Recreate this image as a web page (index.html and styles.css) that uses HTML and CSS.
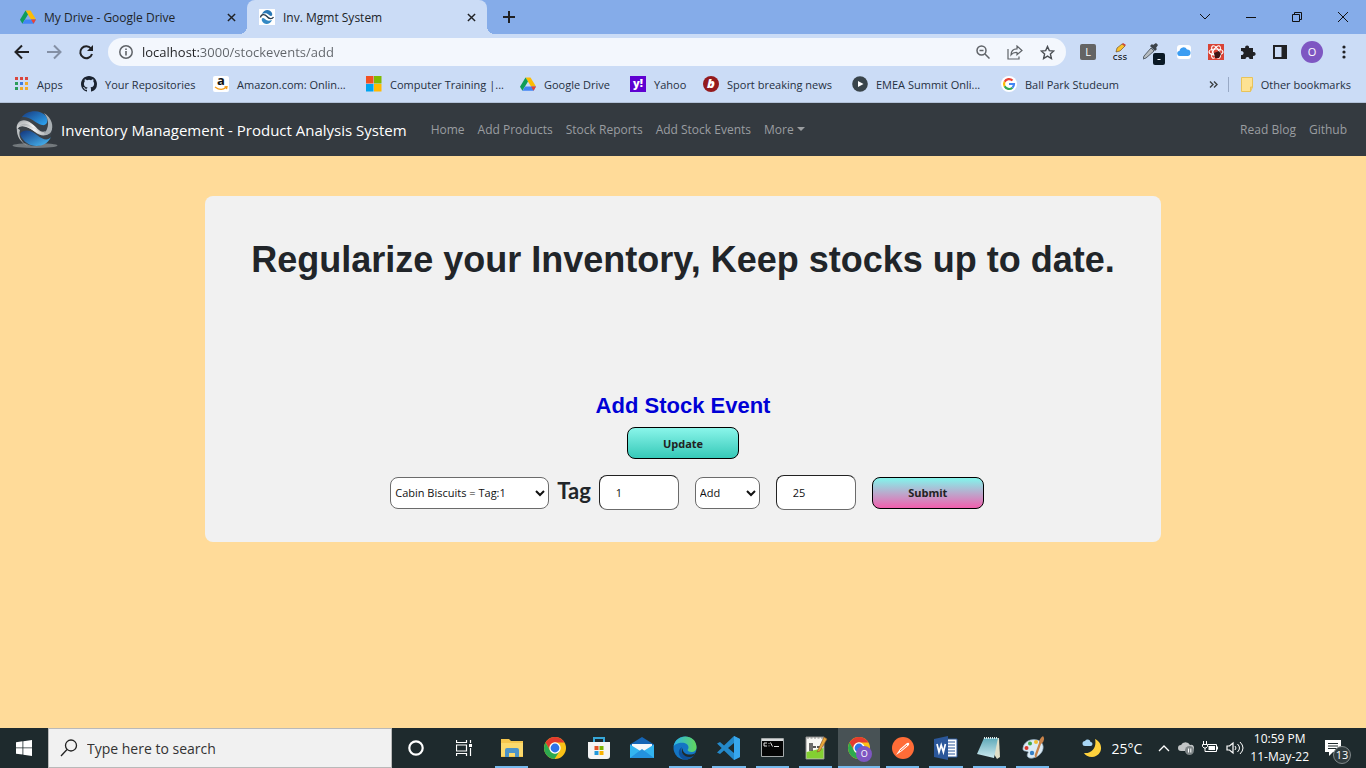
FILE: index.html
```html
<!DOCTYPE html>
<html lang="en">
<head>
<meta charset="utf-8">
<meta name="viewport" content="width=device-width, initial-scale=1">
<title>Inv. Mgmt System</title>
<link rel="stylesheet" href="styles.css">
</head>
<body>
<svg class="defs" width="0" height="0" aria-hidden="true">
  <defs>
    <linearGradient id="blueTop" x1="0" y1="0" x2="1" y2="1"><stop offset="0" stop-color="#163a80"/><stop offset="1" stop-color="#2fa8f4"/></linearGradient>
    <linearGradient id="blueLow" x1="0" y1="0" x2="1" y2="1"><stop offset="0" stop-color="#12357c"/><stop offset="1" stop-color="#4cc0fa"/></linearGradient>
    <linearGradient id="silver" x1="0" y1="0" x2="1" y2="1"><stop offset="0" stop-color="#9da2a6"/><stop offset=".5" stop-color="#f4f4f4"/><stop offset="1" stop-color="#a0a5a8"/></linearGradient>
    <linearGradient id="edgeGreen" x1="0" y1="0" x2="1" y2="0"><stop offset="0" stop-color="#2ab4ea"/><stop offset="1" stop-color="#62d65a"/></linearGradient>
    <linearGradient id="note" x1="0" y1="0" x2="0" y2="1"><stop offset="0" stop-color="#5fa9b8"/><stop offset="1" stop-color="#cdeaf0"/></linearGradient>
    <symbol id="drive" viewBox="0 0 16 16">
      <path d="M5.5 1.500h5L16 10.500h-5z" fill="#fbbc04"/><path d="M5.500 1.500 0 10.700l2.400 4L8 5.500z" fill="#0f9d58"/><path d="M5.200 10.500H16l-2.400 4.200H2.400z" fill="#4285f4"/><path d="M11 10.500h5l-2.400 4.200z" fill="#ea4335"/>
    </symbol>
    <symbol id="sphere" viewBox="0 0 46 40">
      <ellipse cx="23" cy="35.500" rx="22.500" ry="2.600" fill="#73797d"/>
      <circle cx="23" cy="18.500" r="17.500" fill="#3a4148"/>
      <path d="M10 7C15 0 28-1 34 6c3 5 1 10-4 9C23 13 18 6 10 7z" fill="url(#blueTop)"/>
      <path d="M8 24c4-6 12-3 17 1 6 5 11 6 14 2C34 39 14 40 8 24z" fill="url(#blueLow)"/>
      <path d="M5 20c-2-8 6-13 14-7 7 5 9 11 15 8-2 4-8 3-12 0C16 17 8 13 5 20z" fill="url(#silver)"/>
      <path d="M7 17c3-5 9-4 15 1 6 6 14 7 18-1-1 9-10 11-17 5C17 17 10 14 7 17z" fill="url(#silver)"/>
      <path d="M32 3c8 5 10 13 7 19-2 3-5 3-7 2 5-6 6-14 0-21z" fill="#a9afb3"/>
      <path d="M5 18c-1 8 4 15 11 18C9 32 6 26 8 20z" fill="#b9bec1"/>
    </symbol>
    <symbol id="chrome" viewBox="0 0 24 24">
      <circle cx="12" cy="12" r="11" fill="#fbc116"/>
      <path d="M2.500 6.500A11 11 0 0 1 21.500 6.500H12A5.500 5.500 0 0 0 7.200 14.700z" fill="#e33b2e"/>
      <path d="M2.500 6.500A11 11 0 0 0 11.500 23l5.300-8.200a5.500 5.500 0 0 1-9.600-.1z" fill="#2da94f"/>
      <circle cx="12" cy="12" r="5.700" fill="#fff"/><circle cx="12" cy="12" r="4.400" fill="#2f73e8"/>
    </symbol>
    <symbol id="cross" viewBox="0 0 10 10"><path d="M1 1l8 8M9 1 1 9" stroke="#202124" stroke-width="1.600" fill="none"/></symbol>
  </defs>
</svg>

<header class="browser">
  <div class="tabstrip">
    <div class="tab">
      <svg class="ico16"><use href="#drive"/></svg>
      <span class="tab-title">My Drive - Google Drive</span>
      <button class="tab-close" aria-label="Close My Drive"><svg width="9" height="9"><use href="#cross"/></svg></button>
    </div>
    <div class="tab tab-active">
      <svg class="ico16" viewBox="0 0 16 16"><path fill="#fff" d="M0 0h16v16H0z"/><path d="M3 5c2-5 8-5 10-1 1 3-1 4-3 2-2-2-4-2-7-1z" fill="#2a78b5"/><path d="M13 11c-2 5-8 5-10 1-1-3 1-4 3-2 2 2 4 2 7 1z" fill="#3389c4"/><path d="M1.500 8.500C2 4.500 6 5 8 7.500s5 3 6.500.5" stroke="#293b49" stroke-width="1.300" fill="none"/></svg>
      <span class="tab-title">Inv. Mgmt System</span>
      <button class="tab-close" aria-label="Close Inv. Mgmt System"><svg width="9" height="9"><use href="#cross"/></svg></button>
    </div>
    <button class="new-tab" aria-label="New tab"><svg width="12" height="12" viewBox="0 0 12 12"><path d="M6 0v12M0 6h12" stroke="#202124" stroke-width="2"/></svg></button>
    <div class="window-buttons">
      <button aria-label="Search tabs"><svg width="12" height="12" viewBox="0 0 12 12"><path d="M1 3l5 5 5-5" stroke="#111" fill="none"/></svg></button>
      <button aria-label="Minimize"><svg width="12" height="12" viewBox="0 0 12 12"><path d="M1 6.500h10" stroke="#111"/></svg></button>
      <button aria-label="Restore"><svg width="12" height="12" viewBox="0 0 12 12"><path d="M1.500 3.500h7v7h-7zM3.500 3V1.500h7v7H9" stroke="#111" fill="none"/></svg></button>
      <button aria-label="Close"><svg width="12" height="12" viewBox="0 0 12 12"><path d="M1 1l10 10M11 1 1 11" stroke="#111"/></svg></button>
    </div>
  </div>

  <div class="toolbar">
    <div class="history">
      <button aria-label="Back"><svg width="16" height="16" viewBox="0 0 16 16"><path d="M15 8H2M8 1.500 1.500 8 8 14.500" stroke="#202124" stroke-width="2" fill="none"/></svg></button>
      <button aria-label="Forward"><svg width="16" height="16" viewBox="0 0 16 16"><path d="M1 8h13M8 1.500 14.500 8 8 14.500" stroke="#8490a5" stroke-width="2" fill="none"/></svg></button>
      <button aria-label="Reload"><svg width="16" height="16" viewBox="0 0 16 16"><path d="M13 4.500A6 6 0 1 0 14 10" stroke="#202124" stroke-width="2" fill="none"/><path d="M15 1v6H9z" fill="#202124"/></svg></button>
    </div>
    <div class="address">
      <svg class="address-info" width="14" height="14" viewBox="0 0 14 14"><circle cx="7" cy="7" r="6.200" fill="none" stroke="#5f6368" stroke-width="1.500"/><path d="M7 6v4.500M7 3.500V5" stroke="#5f6368" stroke-width="1.600"/></svg>
      <input class="address-input" type="text" aria-label="Address" value="localhost:3000/stockevents/add">
      <div class="address-actions">
        <button aria-label="Zoom"><svg width="14" height="14" viewBox="0 0 14 14"><circle cx="5.500" cy="5.500" r="4.500" fill="none" stroke="#5f6368" stroke-width="1.500"/><path d="M9 9l4.500 4.500M3.500 5.500h4" stroke="#5f6368" stroke-width="1.500"/></svg></button>
        <button aria-label="Share"><svg width="16" height="15" viewBox="0 0 16 15"><path d="M1 4v10h11v-2.500M4 10c0-4 2-6.200 6-6.200V1l5 4.500-5 4.300V7.500C7.500 7.300 5.500 8 4 10z" fill="none" stroke="#5f6368" stroke-width="1.200"/></svg></button>
        <button aria-label="Bookmark"><svg width="15" height="15" viewBox="0 0 15 15"><path d="M7.500 1.500l1.800 4.100 4.500.4-3.400 3 1 4.500-3.900-2.400-3.900 2.400 1-4.500-3.400-3 4.500-.4z" fill="none" stroke="#4b4f54" stroke-width="1.400"/></svg></button>
      </div>
    </div>
    <div class="extensions">
      <button class="ext-l" aria-label="L extension"><span>L</span></button>
      <button class="ext-css" aria-label="CSS editor"><svg width="12" height="10" viewBox="0 0 12 10"><path d="M2 9l1-4 5-4 3 2-5 5z" fill="#f9c22e" stroke="#5c4020" stroke-width=".6"/><path d="M8 1l1-1 3 2-1 1z" fill="#d43a2c"/></svg><span>css</span></button>
      <button class="ext-picker" aria-label="Color picker"><svg width="22" height="22" viewBox="0 0 22 22"><path d="M1 13l7-8 3 3-8 7-3 1z" fill="#b6bcc1" stroke="#56606a"/><path d="M7 3l5 5 2-2-1-1 2-3-2-2-3 2-1-1z" fill="#3c434a"/><rect x="10" y="10" width="12" height="12" rx="2" fill="#0a1925"/><path d="M14.500 16.500h3" stroke="#fff"/></svg></button>
      <button aria-label="iCloud"><svg class="ico16" viewBox="0 0 16 16"><rect x="1" y="1" width="14" height="14" rx="3" fill="#fff"/><path d="M4 12a2.500 2.500 0 0 1-.5-5A4 4 0 0 1 11 5.500a3.300 3.300 0 0 1 1 6.500z" fill="#3a9cf2"/></svg></button>
      <button aria-label="React tools"><svg class="ico16" viewBox="0 0 16 16"><path fill="#d94335" d="M0 0h16v16H0z"/><g fill="none" stroke="#fff" stroke-width="1.200"><ellipse cx="8" cy="8" rx="7" ry="3"/><ellipse cx="8" cy="8" rx="7" ry="3" transform="rotate(60 8 8)"/><ellipse cx="8" cy="8" rx="7" ry="3" transform="rotate(120 8 8)"/></g><path d="M6 9l5-2 2 3-2 4H7z" fill="#3c1515"/></svg></button>
      <button aria-label="Extensions"><svg class="ico16" viewBox="0 0 16 16"><path d="M1 4h4.200a2 2 0 1 1 3.800 0h4v4a2 2 0 1 1 0 3.800V15H9.500a2 2 0 1 0-4 0H1v-4a2 2 0 1 0 0-3.800z" fill="#202124"/></svg></button>
      <button aria-label="Side panel"><svg width="14" height="14" viewBox="0 0 14 14"><path d="M1 1h12v12H1z" fill="none" stroke="#202124" stroke-width="2"/><path d="M8.500 1H13v12H8.500z" fill="#202124"/></svg></button>
      <button class="profile" aria-label="Profile"><span>O</span></button>
      <button aria-label="Menu"><svg width="4" height="16" viewBox="0 0 4 16"><circle cx="2" cy="3" r="1.600" fill="#202124"/><circle cx="2" cy="8" r="1.600" fill="#202124"/><circle cx="2" cy="13" r="1.600" fill="#202124"/></svg></button>
    </div>
  </div>

  <nav class="bookmarks" aria-label="Bookmarks">
    <div class="bookmark-list">
      <a href="#"><svg class="ico16" viewBox="0 0 16 16"><path fill="#d9463d" d="M2 1h3v3H2zM7 1h3v3H7zM12 1h3v3h-3z"/><path fill="#2a9c5a" d="M2 6h3v3H2zM2 11h3v3H2z"/><path fill="#3f7de0" d="M7 6h3v3H7z"/><path fill="#efab2a" d="M12 6h3v3h-3zM7 11h3v3H7zM12 11h3v3h-3z"/></svg>Apps</a>
      <a href="#"><svg class="ico16" viewBox="0 0 16 16"><path fill="#1b2330" d="M8 0C3.580 0 0 3.580 0 8c0 3.540 2.290 6.530 5.470 7.590.4.070.55-.17.55-.38 0-.19-.01-.82-.01-1.490-2.010.37-2.530-.49-2.690-.94-.09-.23-.48-.94-.82-1.130-.28-.15-.68-.52-.01-.53.63-.01 1.080.58 1.230.82.720 1.210 1.870.87 2.330.66.070-.52.280-.87.510-1.070-1.780-.2-3.640-.89-3.640-3.950 0-.87.310-1.590.82-2.150-.08-.2-.36-1.020.080-2.120 0 0 .67-.21 2.200.82a7.600 7.600 0 0 1 4 0c1.530-1.040 2.200-.82 2.200-.82.44 1.100.16 1.920.080 2.120.51.560.82 1.270.82 2.150 0 3.070-1.870 3.750-3.650 3.950.29.250.54.730.54 1.480 0 1.070-.01 1.930-.01 2.200 0 .21.150.46.550.38A8 8 0 0 0 16 8c0-4.420-3.580-8-8-8z"/></svg>Your Repositories</a>
      <a href="#"><span class="ico16 ico-amazon">a<svg width="14" height="5" viewBox="0 0 14 5"><path d="M1 1c4 3 8 3 11 .5M10.500 1l2.500-.3-.5 2.500" stroke="#f59b17" stroke-width="1.300" fill="none"/></svg></span>Amazon.com: Onlin...</a>
      <a href="#"><svg class="ico16" viewBox="0 0 16 16"><path fill="#f25022" d="M0 0h7.500v7.500H0z"/><path fill="#7fba00" d="M8 0h7.500v7.500H8z"/><path fill="#00a4ef" d="M0 8h7.500v7.500H0z"/><path fill="#ffb900" d="M8 8h7.500v7.500H8z"/></svg>Computer Training |...</a>
      <a href="#"><svg class="ico16"><use href="#drive"/></svg>Google Drive</a>
      <a href="#"><span class="ico16 ico-yahoo">y!</span>Yahoo</a>
      <a href="#"><span class="ico16 ico-b">b</span>Sport breaking news</a>
      <a href="#"><svg class="ico16" viewBox="0 0 16 16"><circle cx="8" cy="8" r="7.800" fill="#39444a"/><path d="M6 5l5.500 3L6 11z" fill="#fff"/></svg>EMEA Summit Onli...</a>
      <a href="#"><svg class="ico16" viewBox="0 0 16 16"><circle cx="8" cy="8" r="8" fill="#fff"/><g fill="none" stroke-width="2.200"><path d="M11.500 4.500A5 5 0 0 0 3.600 5.700" stroke="#ea4335"/><path d="M3.600 5.700a5 5 0 0 0 0 4.600" stroke="#fbbc05"/><path d="M3.600 10.300a5 5 0 0 0 7.800 1.400" stroke="#34a853"/><path d="M11.400 11.700A5 5 0 0 0 13 8H8" stroke="#4285f4"/></g></svg>Ball Park Studeum</a>
    </div>
    <div class="bookmark-end">
      <button aria-label="More bookmarks"><svg width="9" height="7" viewBox="0 0 9 7"><path d="M1 .5l3 3-3 3M5 .5l3 3-3 3" stroke="#3c4043" stroke-width="1.400" fill="none"/></svg></button>
      <a class="other" href="#"><svg width="12" height="15" viewBox="0 0 12 15"><path d="M.5.5h11V10l-2 4.500h-9z" fill="#fde293" stroke="#e8c35a"/><path d="M9.500 14.500V10h2" fill="#f3cd61" stroke="#e8c35a"/></svg>Other bookmarks</a>
    </div>
  </nav>
</header>

<nav class="navbar" aria-label="Main">
  <a class="brand" href="#"><svg width="46" height="40"><use href="#sphere"/></svg>Inventory Management - Product Analysis System</a>
  <div class="nav-links">
    <a href="#">Home</a><a href="#">Add Products</a><a href="#">Stock Reports</a><a href="#">Add Stock Events</a><a class="more" href="#">More</a>
  </div>
  <div class="nav-links nav-right"><a href="#">Read Blog</a><a href="#">Github</a></div>
</nav>

<main class="page">
  <section class="card">
    <h1>Regularize your Inventory, Keep stocks up to date.</h1>
    <h2>Add Stock Event</h2>
    <button class="btn btn-update" type="button">Update</button>
    <form class="event-form">
      <div class="tag-group">
        <select class="field product" aria-label="Product"><option>Cabin Biscuits = Tag:1</option></select>
        <label for="tag">Tag</label>
        <input class="field" id="tag" type="text" value="1">
      </div>
      <select class="field action" aria-label="Action"><option>Add</option></select>
      <input class="field" type="text" aria-label="Quantity" value="25">
      <button class="btn btn-submit" type="button">Submit</button>
    </form>
  </section>
</main>

<footer class="taskbar">
  <button class="start" aria-label="Start"><svg width="16" height="16" viewBox="0 0 16 16"><path fill="#fff" d="M0 2.300 6.500 1.300v6.200H0zM7.300 1.200 16 0v7.500H7.300zM0 8.300h6.500v6.300L0 13.700zM7.300 8.300H16V16l-8.700-1.200z"/></svg></button>
  <div class="search">
    <svg width="18" height="18" viewBox="0 0 18 18"><circle cx="11" cy="6.500" r="5.500" fill="none" stroke="#222" stroke-width="1.300"/><path d="M7 10.500 1 17" stroke="#222" stroke-width="1.300"/></svg>
    <input type="text" aria-label="Search" placeholder="Type here to search">
  </div>
  <div class="shell">
    <button aria-label="Cortana"><svg width="16" height="16" viewBox="0 0 16 16"><circle cx="8" cy="8" r="6.700" fill="none" stroke="#fff" stroke-width="2.200"/></svg></button>
    <button aria-label="Task view"><svg width="16" height="16" viewBox="0 0 16 16"><path d="M.5 0v2.500h10V0M.5 5h10v6H.5zM.5 16v-2.500h10V16M14.500 0v3M14.500 8v8" fill="none" stroke="#fff" stroke-width="1.200"/><path d="M13 4h3v3h-3z" fill="#fff"/></svg></button>
  </div>
  <div class="apps">
    <button class="open" aria-label="File Explorer"><svg viewBox="0 0 24 24"><path d="M1 3h8l2 2h12v16H1z" fill="#f5c64d"/><path d="M1 7h22v13H1z" fill="#fbd96c"/><path d="M5 21v-7q0-2 2-2h10q2 0 2 2v7h-4v-4H9v4z" fill="#4c93c8"/></svg></button>
    <button aria-label="Chrome"><svg><use href="#chrome"/></svg></button>
    <button aria-label="Microsoft Store"><svg viewBox="0 0 24 24"><path d="M7 7V2h10v5" fill="none" stroke="#36a7d8" stroke-width="2"/><path d="M1 6h22v14q0 3-3 3H4q-3 0-3-3z" fill="#f4f4f4"/><path d="M7.500 10h4v4h-4z" fill="#e35325"/><path d="M12.500 10h4v4h-4z" fill="#7bb500"/><path d="M7.500 15h4v4h-4z" fill="#2198dc"/><path d="M12.500 15h4v4h-4z" fill="#f9b200"/></svg></button>
    <button aria-label="Mail"><svg viewBox="0 0 24 24"><path d="M0 8.500 12 1l12 7.500V22H0z" fill="#1565b5"/><path d="M2 8h20v8H2z" fill="#f5f8fa"/><path d="M0 8.500 12 16l12-7.500V22H0z" fill="#33b4ef"/><path d="M0 22 12 13l12 9z" fill="#2492dd"/></svg></button>
    <button class="open" aria-label="Edge"><svg viewBox="0 0 24 24"><circle cx="12" cy="12" r="11.500" fill="#1475c4"/><path d="M.6 11C2-3 23-3 23.500 11c.2 6-8 6-9 3 2-2 1-6-3-7C7 6 1 8 .6 11z" fill="url(#edgeGreen)"/><path d="M9 11c-3 6 4 12 12 8-1 3-6 5-9 4.500C6 23 3 14 9 11z" fill="#0d4f99"/><path d="M9.500 12c0 7 8 8 13 5l-2 3c-7 3-14-2-11-8z" fill="#1e2a2d"/></svg></button>
    <button class="open" aria-label="Visual Studio Code"><svg viewBox="0 0 24 24"><path d="M17 0l6 3v18l-6 3L7 14.500 3 18l-3-1.500L4.700 12 0 7.500 3 6l4 3.500zM17 7l-6 5 6 5z" fill="#2489ca" fill-rule="evenodd"/><path d="M17 0l6 3v18l-6 3z" fill="#37a7ed"/></svg></button>
    <button class="open" aria-label="Command Prompt"><svg viewBox="0 0 24 24"><path d="M1.500 2.500h22v18h-22z" fill="#050505" stroke="#a5aaab"/><path d="M2 3h21v2H2z" fill="#d8dadb"/><path d="M7 7H4v3h3M9 7v.8M9 9.500v.8M10.500 6.500l2 4M14 10.500h5" stroke="#e2e2e2" fill="none"/></svg></button>
    <button class="open" aria-label="Notepad++"><svg viewBox="0 0 24 24"><path d="M2 1h18v22H2z" fill="#f8f8f4" stroke="#8a8a8a"/><path d="M2.500 16l17-4v10.500h-17z" fill="#83cf31"/><path d="M3 2h16" stroke="#888" stroke-dasharray="2 1.500"/><path d="M6 7v8M8 7v8M9 11h3M13 11h3" stroke="#222" stroke-width="1.300"/><path d="M14 14 20 1l3 2-7 12-3 1z" fill="#e9a63a" stroke="#8b5a2a" stroke-width=".7"/></svg></button>
    <button class="open active" aria-label="Chrome, profile O"><svg><use href="#chrome"/></svg><span class="app-badge">O</span></button>
    <button class="open" aria-label="Postman"><svg viewBox="0 0 24 24"><circle cx="12" cy="12" r="11" fill="#ff6c37"/><path d="M5 19l4-6 7-6q3-1 2 2l-7 6z" fill="#fff"/><path d="M9 15l7-6" stroke="#ff6c37"/></svg></button>
    <button class="open" aria-label="Word"><svg viewBox="0 0 24 24"><path d="M12 3h11v18H12z" fill="#fff" stroke="#2b579a"/><path d="M14 6h7M14 9h7M14 12h7M14 15h7M14 18h7" stroke="#2b579a"/><path d="M0 3l14-3v24L0 21z" fill="#2b579a"/><path d="M3 8l2 8 2.200-7 2.200 7 2-8" fill="none" stroke="#fff" stroke-width="1.700"/></svg></button>
    <button class="open" aria-label="Notepad"><svg viewBox="0 0 24 24"><path d="M7 2h15l1 19-3 2z" fill="#e0dfc8"/><path d="M7 2h14l-4 20L0 18z" fill="url(#note)"/><path d="M7 2h14" stroke="#dce8ea" stroke-width="2" stroke-dasharray="1 1"/></svg></button>
    <button class="open" aria-label="Paint"><svg viewBox="0 0 24 24"><path d="M2 12C3 4 14 1 20 6c5 5 1 14-8 16-5 1-7-2-5-5s-6 0-5-5z" fill="#dcebf5" stroke="#91a9bc" stroke-width=".7"/><circle cx="5.500" cy="12" r="2" fill="#d9372b"/><circle cx="9" cy="7.500" r="2" fill="#42a847"/><circle cx="15" cy="6" r="2" fill="#efbd31"/><circle cx="11" cy="17" r="2.200" fill="#357fc5"/><path d="M22 0q3 4-2 8l-5 14q-2-1-1-4l4-11q0-4 4-7z" fill="#c8834a"/></svg></button>
  </div>
  <div class="tray">
    <a class="weather" href="#"><svg width="20" height="20" viewBox="0 0 20 20"><path d="M13 1c9 4 8 17-3 18-4 0-7-2-8-4 8 1 13-6 11-14z" fill="#ffd23d"/><path d="M3 8a2.500 2.500 0 0 1 0-5 3 3 0 0 1 5.500 1 2 2 0 0 1 0 4z" fill="#a8d6f5"/></svg>25°C</a>
    <div class="tray-icons">
      <svg width="12" height="8" viewBox="0 0 12 8"><path d="M1 7l5-5 5 5" fill="none" stroke="#fff" stroke-width="1.300"/></svg>
      <svg width="16" height="14" viewBox="0 0 16 14"><path d="M3 10a3 3 0 0 1 0-6 5 5 0 0 1 9 0 3 3 0 0 1 2 6z" fill="#c2c5c6"/><circle cx="11.500" cy="9.500" r="4.500" fill="#7e8587"/><path d="M10.500 7.500v4M12.800 7.500v4" stroke="#fff"/></svg>
      <svg width="16" height="14" viewBox="0 0 16 14"><path d="M6 3.500h8.500v7H4" fill="none" stroke="#fff"/><path d="M6.500 5H13v4H6.500zM15 5.500h1v3h-1z" fill="#fff"/><path d="M1.500 0v3M4.500 0v3M.5 3.500h5v2L4 7H2L.5 5.500zM3 7v3.500h2" stroke="#fff" fill="none"/></svg>
      <svg width="18" height="14" viewBox="0 0 18 14"><path d="M1 5h2.500L7 2v10L3.500 9H1z" fill="none" stroke="#fff" stroke-width="1.200"/><path d="M9 5q2 2 0 4M11.500 3q4 4 0 8M14 1q6 6 0 12" fill="none" stroke="#fff"/></svg>
    </div>
    <div class="clock"><time>10:59 PM</time><time>11-May-22</time></div>
    <button class="notices" aria-label="Notifications"><svg width="16" height="16" viewBox="0 0 16 16"><path d="M0 0h16v12H8l-4 4v-4H0z" fill="#fff"/><path d="M3 3.500h10M3 6h10M3 8.500h10" stroke="#1e2a2d"/></svg><span>13</span></button>
  </div>
</footer>
</body>
</html>
```
FILE: styles.css
```css
* { box-sizing: border-box; }

body {
  margin: 0;
  min-height: 100vh;
  display: flex;
  flex-direction: column;
  background: #ffdb99;
  font-family: "Open Sans", "Noto Sans", sans-serif;
  font-size: 12px;
  color: #212529;
}

button, input, select { font: inherit; color: inherit; }
button { border: 0; padding: 0; background: none; }
a { color: inherit; text-decoration: none; }
svg { display: block; flex: none; }
.defs { position: absolute; }
.ico16 { width: 16px; height: 16px; flex: none; }

/* Browser frame */
.browser { background: #cbdcf6; border-bottom: 1px solid #b2c1d8; }
.tabstrip { display: flex; align-items: center; height: 34px; background: #85ace9; padding-left: 12px; }
.tab { display: flex; align-items: center; gap: 8px; width: 240px; height: 34px; padding: 0 8px; }
.tab:first-child { width: 235px; }
.tab-title { flex: 1; }
.tab-close { display: grid; place-items: center; width: 16px; height: 16px; }
.tab-active { position: relative; background: #cbdcf6; border-radius: 8px 8px 0 0; padding-left: 12px; }
.tab-active::before, .tab-active::after {
  content: "";
  position: absolute;
  bottom: 0;
  width: 8px;
  height: 8px;
}
.tab-active::before { right: 100%; background: radial-gradient(circle at 0 0, #85ace9 8px, #cbdcf6 8px); }
.tab-active::after { left: 100%; background: radial-gradient(circle at 100% 0, #85ace9 8px, #cbdcf6 8px); }
.new-tab { display: grid; place-items: center; width: 44px; height: 34px; }
.window-buttons { display: flex; margin-left: auto; }
.window-buttons button { display: grid; place-items: center; width: 46px; height: 28px; }

.toolbar { display: flex; align-items: center; height: 36px; padding: 0 6px; }
.history { display: flex; width: 102px; }
.history button { display: grid; place-items: center; width: 32px; height: 28px; }
.address { flex: 1; display: flex; align-items: center; gap: 8px; height: 28px; padding: 0 11px; border-radius: 14px; background: #f3f7fd; }
.address-input {
  flex: 1;
  min-width: 0;
  border: 0;
  outline: 0;
  padding: 0 0 0 1px;
  font-size: 13px;
  color: transparent;
  background: linear-gradient(90deg, #202124 59px, #5f6368 59px);
  background-clip: text;
  -webkit-background-clip: text;
}
.address-actions { display: flex; gap: 16px; }
.address-actions button { display: grid; place-items: center; width: 16px; height: 16px; }
.extensions { display: flex; padding-left: 6px; }
.extensions button { display: grid; place-items: center; width: 32px; height: 28px; }
.ext-l span { width: 16px; height: 16px; line-height: 16px; border-radius: 2px; background: #646464; color: #fff; font-size: 11px; }
.extensions .ext-css { align-content: center; }
.extensions .ext-picker { padding: 4px 0 0 4px; }
.ext-css span { font: 9px/8px "DejaVu Sans", sans-serif; color: #000; }
.profile span { width: 22px; height: 22px; line-height: 22px; border-radius: 50%; background: #7e57c2; color: #fff; font-size: 11px; }

.bookmarks { display: flex; align-items: center; justify-content: space-between; height: 32px; padding: 0 15px 4px 13px; font-size: 11px; color: #26303f; }
.bookmark-list { display: grid; grid-template-columns: 68px 132px 153px 154px 110px 73px 149px 149px auto; }
.bookmarks a { display: flex; align-items: center; gap: 8px; white-space: nowrap; }
.ico-amazon { display: grid; justify-items: center; background: #fff; border-radius: 2px; color: #111; font-weight: 700; font-size: 13px; line-height: 9px; }
.ico-yahoo { background: #5f01d1; color: #fff; font-weight: 800; font-size: 11px; line-height: 14px; text-align: center; }
.ico-b { border-radius: 50%; background: #941a1d; color: #fff; font: italic 800 13px/15px "Open Sans", sans-serif; text-align: center; }
.bookmark-end { display: flex; align-items: center; gap: 10px; }
.other { border-left: 1px solid #98a9c5; padding-left: 12px; }

/* Application navigation */
.navbar { display: flex; align-items: center; height: 53px; padding: 0 19px 0 12px; background: #343a40; }
.brand { display: flex; align-items: center; gap: 3px; color: #fff; font-size: 15px; white-space: nowrap; }
.nav-links { display: flex; gap: 13px; margin-left: 24px; font-size: 12px; color: #9a9da0; white-space: nowrap; }
.nav-right { margin-left: auto; }
.more::after { content: ""; display: inline-block; margin-left: 3px; vertical-align: 3px; border: 4px solid transparent; border-top-color: currentColor; border-bottom: 0; }

/* Stock event card */
.page { flex: 1; padding: 40px 0; }
.card { display: flex; flex-direction: column; align-items: center; width: 70%; margin: 0 auto; padding: 40px 16px 32px; border-radius: 8px; background: #f1f1f1; }
h1, h2 { margin: 0; font-family: "Liberation Sans", Arial, sans-serif; font-weight: 700; text-align: center; }
h1 { font-size: 36px; line-height: 48px; margin-bottom: 108px; }
h2 { font-size: 22px; line-height: 28px; margin-bottom: 7px; color: #0000d6; }
.btn { width: 112px; height: 32px; border: 1px solid #000; border-radius: 8px; font-weight: 700; font-size: 11px; color: #222; }
.btn-update { background: linear-gradient(#8af5ea, #36c9b8); }
.btn-submit { background: linear-gradient(#82f5ec, #f25fae); }
.event-form { display: flex; flex-wrap: wrap; align-items: center; justify-content: center; gap: 16px; margin-top: 16px; padding-left: 8px; }
.tag-group { display: flex; align-items: center; gap: 8px; }
.tag-group label { padding-bottom: 4px; font-family: Lato, sans-serif; font-size: 22px; line-height: 24px; font-weight: 700; }
.field { border: 1px solid #6b6b6b; border-radius: 8px; background: #fff; color: #111; font-size: 11px; }
input.field { width: 80px; height: 35px; padding: 0 16px; border-top-color: #222; border-left-color: #222; }
select.field { height: 32px; padding: 0; }
.product { width: 159px; }
.action { width: 65px; }

/* Desktop taskbar */
.taskbar { display: flex; height: 40px; background: #1e2a2d; color: #fff; }
.taskbar button { display: grid; place-items: center; }
.start { width: 48px; }
.search { display: flex; align-items: center; gap: 9px; width: 344px; padding: 0 12px 0 11px; border: 1px solid #b9b9b9; background: #f1f1f1; }
.search input { flex: 1; min-width: 0; border: 0; outline: 0; padding: 0; background: none; font-size: 14px; color: #222; }
.search input::placeholder { color: #333; opacity: 1; }
.shell { display: flex; }
.shell button { width: 48px; }
.apps { flex: 1; display: flex; gap: 2px; margin-left: 3px; }
.apps button { position: relative; flex: 1; }
.apps svg { width: 24px; height: 24px; }
.apps .open::after { content: ""; position: absolute; left: 4px; right: 4px; bottom: 0; height: 2px; background: #76b9ed; }
.apps .active { background: #485255; }
.apps .active::after { left: 0; right: 0; }
.app-badge { position: absolute; left: 18px; top: 18px; width: 16px; height: 16px; border-radius: 50%; background: #7e57c2; font-size: 9px; line-height: 16px; text-align: center; }
.tray { display: flex; align-items: center; margin-left: 28px; padding-right: 9px; }
.weather { display: flex; align-items: center; gap: 10px; font-size: 14px; }
.tray-icons { display: flex; align-items: center; gap: 8px; margin-left: 16px; }
.clock { display: grid; justify-items: center; margin-left: 6px; font-size: 12px; line-height: 18px; white-space: nowrap; }
.notices { position: relative; width: 48px; height: 40px; }
.notices span { position: absolute; left: 24px; top: 18px; width: 18px; height: 18px; border: 1px solid #81898b; border-radius: 50%; background: #303b3e; font-size: 11px; line-height: 16px; text-align: center; }
```
